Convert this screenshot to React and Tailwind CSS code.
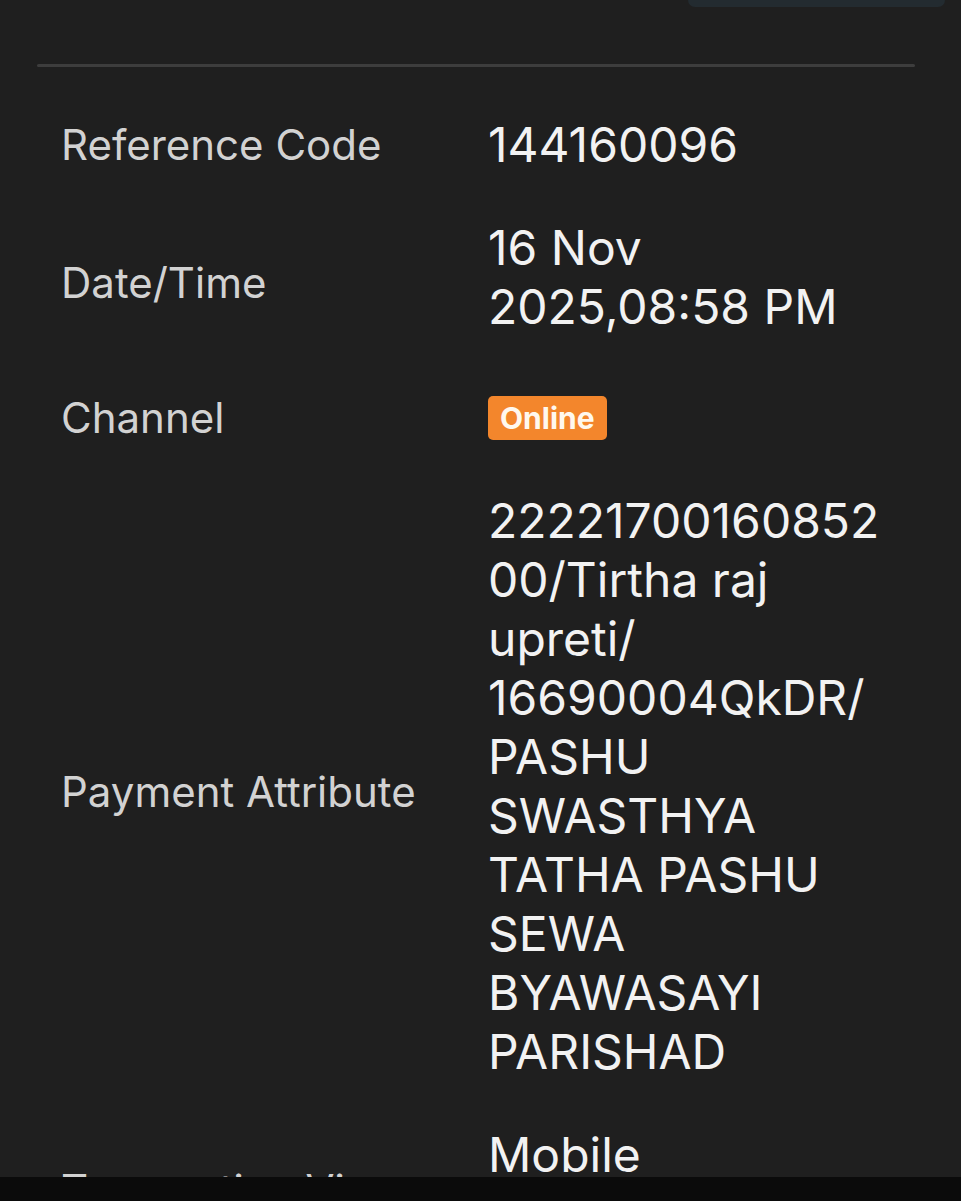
const rows = [
  { label: 'Reference Code', value: ['144160096'] },
  { label: 'Date/Time', value: ['16 Nov', '2025,08:58 PM'] },
  { label: 'Channel', badge: 'Online' },
  {
    label: 'Payment Attribute',
    value: [
      '22221700160852',
      '00/Tirtha raj',
      'upreti/',
      '16690004QkDR/',
      'PASHU',
      'SWASTHYA',
      'TATHA PASHU',
      'SEWA',
      'BYAWASAYI',
      'PARISHAD',
    ],
  },
  { label: 'Transaction Via', value: ['Mobile', 'Banking'] },
]

function DetailRow({ row }) {
  const multiline = row.value && row.value.length > 1
  return (
    <div className={`grid grid-cols-[427px_1fr] items-center ${row.badge ? 'mt-[8px]' : ''}`}>
      <div className={`text-[42px] leading-[59px] text-[#d2d2d2] ${multiline ? 'pt-[11px]' : ''}`}>
        {row.label}
      </div>
      <div className="min-h-[59px] flex items-center">
        {row.badge ? (
          <span className="inline-flex items-center h-[44px] px-[12px] rounded-[5px] bg-[#f3862c] text-[#fff8ee] text-[30px] font-bold leading-none">
            {row.badge}
          </span>
        ) : (
          <div className="text-[48px] leading-[59px] text-[#f2f2f2]">
            {row.value.map(line => (
              <div key={line}>{line}</div>
            ))}
          </div>
        )}
      </div>
    </div>
  )
}

export default function App() {
  return (
    <div
      className="h-[1201px] flex flex-col bg-[#1f1f1f] overflow-hidden"
      style={{ fontFamily: 'Inter, "Noto Sans", sans-serif' }}
    >
      <div className="flex-1 overflow-hidden">
        {/* bottom edge of the action bar above */}
        <div className="flex justify-end pr-[16px]">
          <div className="w-[257px] h-[7px] rounded-b-[8px] bg-[#232b30]" />
        </div>

        <div className="pl-[37px] pr-[46px] pt-[57px]">
          <div className="h-[3px] rounded-full bg-[#3d3d3d]" />

          <div className="pl-[24px] pt-[48px] flex flex-col gap-[44px]">
            {rows.map(row => (
              <DetailRow key={row.label} row={row} />
            ))}
          </div>
        </div>
      </div>

      {/* system nav strip */}
      <div className="h-[24px] bg-[#0b0b0b]" />
    </div>
  )
}
